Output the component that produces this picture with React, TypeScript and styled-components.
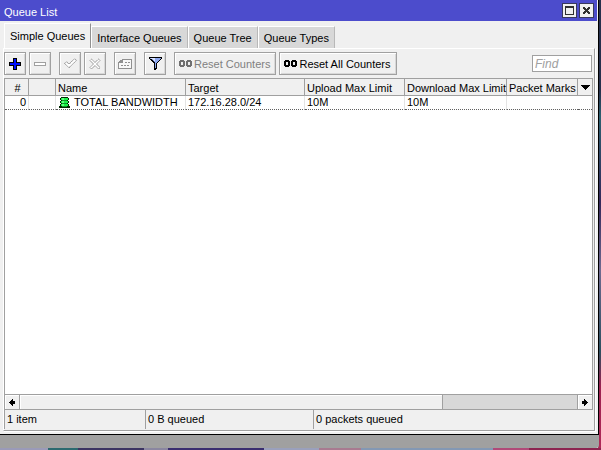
import React from "react";
import styled, { createGlobalStyle } from "styled-components";

const GlobalStyle = createGlobalStyle`
  * { box-sizing: border-box; }
  html, body { margin: 0; padding: 0; }
  body, button, input, table {
    font-family: "Liberation Sans", Arial, sans-serif;
    font-size: 11px;
    line-height: 14px;
    color: #000;
  }
`;

const Desktop = styled.div`
  height: 100vh;
  padding: 0 2px 2px 0;
  overflow: hidden;
  background:
    linear-gradient(90deg, #9a9ab8 0 8%, #2c6a70 8% 13%, #3c3462 13% 24%, #8a86a0 24% 28%, #3a2e70 28% 44%, #9aa0bc 44% 53%, #a87a90 53% 60%, #8398b4 60% 82%, #b04a78 82% 88%, #8c2450 88%) left bottom / 100% 2px no-repeat,
    linear-gradient(180deg, #27304c 0 20%, #2d6070 26%, #35285a 45%, #6f6a90 60%, #2c5060 78%, #9c2050 86%, #b02a58) right top / 3px 100% no-repeat;
`;

const Workspace = styled.div`
  height: 100%;
  padding: 0 0 13px;
  border-bottom-right-radius: 3px;
  background: #a0a0a0;
`;

const Window = styled.main`
  height: 100%;
  display: flex;
  flex-direction: column;
  background: #f0f0f0;
  border-right: 1px solid #000;
  border-bottom: 1px solid #000;
`;

const TitleBar = styled.header`
  display: flex;
  align-items: center;
  gap: 2px;
  height: 21px;
  flex: none;
  margin-right: 1px;
  padding: 0 3px 0 4px;
  background: #4c4ccc;
  color: #fff;
`;

const Title = styled.h1`
  flex: 1;
  margin: 0;
  padding-top: 2px;
  font-size: 11px;
  font-weight: normal;
`;

const WindowButton = styled.button`
  display: grid;
  place-items: center;
  width: 15px;
  height: 15px;
  padding: 0;
  border: 1px solid #38385c;
  background: #f0f0f0;
`;

const Tabs = styled.div`
  display: flex;
  align-items: flex-end;
  height: 27px;
  flex: none;
  padding-left: 4px;
`;

const Tab = styled.button<{ $active?: boolean }>`
  height: ${(p) => (p.$active ? 25 : 22)}px;
  padding: 0 5px;
  border: 0;
  border-left: 1px solid #fff;
  border-top: 1px solid #fff;
  border-right: 1px solid ${(p) => (p.$active ? "#909090" : "#b8b8b8")};
  background: ${(p) => (p.$active ? "#f0f0f0" : "#d8d8d8")};
  white-space: nowrap;
`;

const Panel = styled.section`
  flex: 1;
  min-height: 0;
  display: flex;
  flex-direction: column;
  margin: 0 3px 3px;
  border-top: 1px solid #fff;
  border-left: 1px solid #fff;
  border-right: 1px solid #a0a0a0;
  border-bottom: 1px solid #a0a0a0;
  box-shadow: 1px 1px #fff;
`;

const Toolbar = styled.div`
  display: flex;
  align-items: center;
  height: 29px;
  flex: none;
  gap: 3px;
  padding-right: 2px;
`;

const Group = styled.div`
  display: flex;
  gap: 3px;
  margin-right: 5px;
`;

const ToolButton = styled.button<{ $wide?: boolean }>`
  display: flex;
  align-items: center;
  justify-content: center;
  gap: 2px;
  width: ${(p) => (p.$wide ? "auto" : "22px")};
  height: 23px;
  padding: ${(p) => (p.$wide ? "0 5px 0 4px" : "0")};
  border: 1px solid #a0a0a0;
  box-shadow: inset 1px 1px #fff, inset -1px -1px #d8d8d8;
  background: #f0f0f0;
  white-space: nowrap;
  &:disabled { color: #808080; }
`;

const Find = styled.input`
  width: 60px;
  height: 17px;
  margin-left: auto;
  padding: 0 2px;
  border: 1px solid #a0a0a0;
  border-radius: 0;
  background: #fff;
  font-size: 12px;
  font-style: italic;
  &::placeholder { color: #a0a0a0; opacity: 1; }
`;

const ListArea = styled.div`
  flex: 1;
  min-height: 0;
  overflow: hidden;
  margin-right: 1px;
  border: 1px solid #a0a0a0;
  border-bottom: 0;
  background: #fff;
`;

const Table = styled.table`
  width: 100%;
  table-layout: fixed;
  border-collapse: separate;
  border-spacing: 0;
  white-space: nowrap;
`;

const Col = styled.col<{ $w?: number }>`
  width: ${(p) => (p.$w ? `${p.$w}px` : "auto")};
`;

const Th = styled.th<{ $center?: boolean; $last?: boolean }>`
  height: 17px;
  padding: ${(p) => (p.$last ? "0" : "2px 0 0 2px")};
  border-right: ${(p) => (p.$last ? "0" : "1px solid #a0a0a0")};
  border-bottom: 1px solid #a0a0a0;
  background: #f0f0f0;
  font-weight: normal;
  text-align: ${(p) => (p.$center ? "center" : "left")};
`;

const Td = styled.td<{ $right?: boolean; $last?: boolean }>`
  height: 14px;
  padding: 0 2px;
  border-right: ${(p) => (p.$last ? "0" : "1px solid #e4e4e4")};
  border-bottom: 1px dotted #606060;
  text-align: ${(p) => (p.$right ? "right" : "left")};
  line-height: 13px;
`;

const NameCell = styled.span`
  display: flex;
  align-items: center;
  gap: 4px;
  padding-left: 1px;
`;

const ColumnsButton = styled.button`
  display: grid;
  place-items: center;
  width: 100%;
  height: 16px;
  padding: 0;
  border: 0;
  background: #f0f0f0;
`;

const ScrollBar = styled.div`
  display: flex;
  height: 16px;
  flex: none;
  margin-right: 1px;
  border: 1px solid #a0a0a0;
  background: #d8d8d8;
`;

const ScrollButton = styled.button<{ $end?: boolean }>`
  display: grid;
  place-items: center;
  width: 15px;
  padding: 0;
  border: 0;
  border-${(p) => (p.$end ? "left" : "right")}: 1px solid #a0a0a0;
  box-shadow: inset 1px 1px #fff;
  background: #f0f0f0;
`;

const Track = styled.div`
  flex: 1;
  display: flex;
`;

const Thumb = styled.div`
  width: 76%;
  border-right: 1px solid #a0a0a0;
  box-shadow: inset 1px 1px #fff;
  background: #f0f0f0;
`;

const StatusBar = styled.footer`
  display: grid;
  grid-template-columns: 141px 168px 1fr;
  height: 20px;
  flex: none;
`;

const Status = styled.div`
  margin-bottom: 1px;
  padding: 2px 2px 0;
  border-left: 1px solid #a0a0a0;
  line-height: 15px;
`;

const Icon = ({ w, h, children }: { w: number; h: number; children: React.ReactNode }) => (
  <svg width={w} height={h} viewBox={`0 0 ${w} ${h}`} shapeRendering="crispEdges" aria-hidden="true">
    {children}
  </svg>
);

const PlusIcon = () => (
  <Icon w={12} h={12}>
    <path d="M4 0h4v4h4v4H8v4H4V8H0V4h4z" fill="#000" />
    <path d="M5 1h2v4h4v2H7v4H5V7H1V5h4z" fill="#0010ff" />
  </Icon>
);

const MinusIcon = () => (
  <Icon w={12} h={4}>
    <path d="M0 0h12v4H0z" fill="#a0a0a0" />
    <path d="M1 1h10v2H1z" fill="#fff" />
  </Icon>
);

const CheckIcon = () => (
  <svg width="13" height="11" viewBox="0 0 13 11" aria-hidden="true">
    <path d="M.7 5.5 2.5 3.7 5 6.2 10.5.7 12.3 2.5 5 9.8z" fill="#fff" stroke="#707070" strokeDasharray="1 .6" />
  </svg>
);

const CrossIcon = () => (
  <svg width="12" height="12" viewBox="0 0 12 12" aria-hidden="true">
    <path d="M1 2.5 2.5 1 6 4.5 9.5 1 11 2.5 7.5 6 11 9.5 9.5 11 6 7.5 2.5 11 1 9.5 4.5 6z" fill="#fff" stroke="#707070" strokeDasharray="1 .6" />
  </svg>
);

const NoteIcon = () => (
  <Icon w={14} h={10}>
    <path d="M4 0h10v10H0V3h1V2h1V1h2z" fill="#909090" />
    <path d="M5 1h8v8H1V4h4z" fill="#f8f8f8" />
    <path d="M2 3h1V2h1v1zM7 3h2v1H7zM10 3h2v1h-2zM3 6h2v1H3zM6 6h2v1H6zM9 6h2v1H9z" fill="#909090" />
  </Icon>
);

const FunnelIcon = () => (
  <Icon w={13} h={13}>
    <path d="M0 0h13v2h-1v1h-1v1h-1v1H9v1H8v6H7v1H5V6H4V5H3V4H2V3H1V2H0z" fill="#000" />
    <path d="M1 1h11v1h-1v1h-1v1H9v1H8v1H7v5H6V5H5V4H4V3H3V2H1z" fill="#8ca6ee" />
    <path d="M2 1h4v1H2zM4 2h2v2H5V3H4z" fill="#dce6ff" />
  </Icon>
);

const CounterIcon = ({ color }: { color: string }) => (
  <Icon w={13} h={7}>
    <path
      fill={color}
      fillRule="evenodd"
      d="M1 0h4v1h1v5H5v1H1V6H0V1h1zM2 2v3h2V2zM8 0h4v1h1v5h-1v1H8V6H7V1h1zM9 2v3h2V2z"
    />
  </Icon>
);

const QueueIcon = () => (
  <Icon w={11} h={11}>
    <path d="M2 0h7v1h1v2H9v1h1v2H9v1h1v2h1v2H0V9h1V7h1V6H1V4h1V3H1V1h1z" fill="#002800" />
    <path d="M2 1h7v2H2zM2 4h7v2H2zM2 7h7v2H2z" fill="#18f048" />
    <path d="M3 3h5v1H3zM3 6h5v1H3zM3 9h5v1H3z" fill="#0a9828" />
    <path d="M3 1h2v2H3zM3 4h2v2H3zM3 7h2v2H3z" fill="#60ff80" />
  </Icon>
);

const MaximizeIcon = () => (
  <Icon w={9} h={9}>
    <path d="M0 0h9v9H0zM1 2v6h7V2z" fillRule="evenodd" fill="#303030" />
  </Icon>
);

const CloseIcon = () => (
  <Icon w={7} h={7}>
    <path d="M0 0h2v1h1v1h1V1h1V0h2v2H6v1H5v1h1v1h1v2H5V6H4V5H3v1H2v1H0V5h1V4h1V3H1V2H0z" fill="#303030" />
  </Icon>
);

const DownIcon = () => (
  <Icon w={9} h={5}>
    <path d="M0 0h9v1H8v1H7v1H6v1H5v1H4V4H3V3H2V2H1V1H0z" fill="#000" />
  </Icon>
);

const LeftIcon = () => (
  <Icon w={6} h={7}>
    <path d="M3 0h1v2h2v3H4v2H3V6H2V5H1V4H0V3h1V2h1V1h1z" fill="#000" />
  </Icon>
);

const RightIcon = () => (
  <Icon w={6} h={7}>
    <path d="M3 0H2v2H0v3h2v2h1V6h1V5h1V4h1V3H5V2H4V1H3z" fill="#000" />
  </Icon>
);

const queues = [
  { id: 0, name: "TOTAL BANDWIDTH", target: "172.16.28.0/24", upload: "10M", download: "10M", marks: "" },
];

export default function App() {
  return (
    <>
      <GlobalStyle />
      <Desktop>
        <Workspace>
          <Window>
            <TitleBar>
              <Title>Queue List</Title>
              <WindowButton aria-label="Maximize"><MaximizeIcon /></WindowButton>
              <WindowButton aria-label="Close"><CloseIcon /></WindowButton>
            </TitleBar>
            <Tabs role="tablist">
              <Tab role="tab" aria-selected="true" $active>Simple Queues</Tab>
              <Tab role="tab" aria-selected="false">Interface Queues</Tab>
              <Tab role="tab" aria-selected="false">Queue Tree</Tab>
              <Tab role="tab" aria-selected="false">Queue Types</Tab>
            </Tabs>
            <Panel>
              <Toolbar>
                <Group>
                  <ToolButton aria-label="Add"><PlusIcon /></ToolButton>
                  <ToolButton aria-label="Remove" disabled><MinusIcon /></ToolButton>
                </Group>
                <Group>
                  <ToolButton aria-label="Enable" disabled><CheckIcon /></ToolButton>
                  <ToolButton aria-label="Disable" disabled><CrossIcon /></ToolButton>
                </Group>
                <Group>
                  <ToolButton aria-label="Comment" disabled><NoteIcon /></ToolButton>
                </Group>
                <Group>
                  <ToolButton aria-label="Filter"><FunnelIcon /></ToolButton>
                </Group>
                <ToolButton $wide disabled><CounterIcon color="#707070" />Reset Counters</ToolButton>
                <ToolButton $wide><CounterIcon color="#000" />Reset All Counters</ToolButton>
                <Find type="text" placeholder="Find" aria-label="Find" />
              </Toolbar>
              <ListArea>
                <Table>
                  <colgroup>
                    <Col $w={24} />
                    <Col $w={27} />
                    <Col $w={130} />
                    <Col $w={119} />
                    <Col $w={100} />
                    <Col $w={102} />
                    <Col />
                    <Col $w={14} />
                  </colgroup>
                  <thead>
                    <tr>
                      <Th $center>#</Th>
                      <Th />
                      <Th>Name</Th>
                      <Th>Target</Th>
                      <Th>Upload Max Limit</Th>
                      <Th>Download Max Limit</Th>
                      <Th>Packet Marks</Th>
                      <Th $last>
                        <ColumnsButton aria-label="Choose columns"><DownIcon /></ColumnsButton>
                      </Th>
                    </tr>
                  </thead>
                  <tbody>
                    {queues.map((q) => (
                      <tr key={q.id}>
                        <Td $right>{q.id}</Td>
                        <Td />
                        <Td><NameCell><QueueIcon />{q.name}</NameCell></Td>
                        <Td>{q.target}</Td>
                        <Td>{q.upload}</Td>
                        <Td>{q.download}</Td>
                        <Td $last>{q.marks}</Td>
                        <Td $last />
                      </tr>
                    ))}
                  </tbody>
                </Table>
              </ListArea>
              <ScrollBar>
                <ScrollButton aria-label="Scroll left"><LeftIcon /></ScrollButton>
                <Track><Thumb /></Track>
                <ScrollButton $end aria-label="Scroll right"><RightIcon /></ScrollButton>
              </ScrollBar>
              <StatusBar>
                <Status>1 item</Status>
                <Status>0 B queued</Status>
                <Status>0 packets queued</Status>
              </StatusBar>
            </Panel>
          </Window>
        </Workspace>
      </Desktop>
    </>
  );
}
